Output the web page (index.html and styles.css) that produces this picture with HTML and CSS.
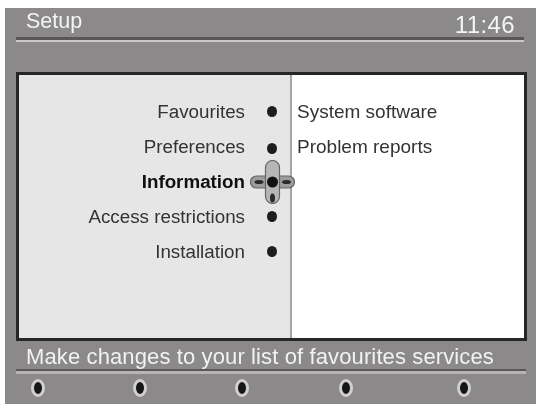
FILE: index.html
```html
<!DOCTYPE html>
<html lang="en">
<head>
    <meta charset="UTF-8">
    <meta name="viewport" content="width=device-width, initial-scale=1.0">
    <title>Setup</title>
    <link rel="stylesheet" href="styles.css">
</head>
<body>
    <div class="screen">
        <div class="header">
            <div class="title">Setup</div>
            <div class="clock">11:46</div>
        </div>

        <div class="panel">
            <div class="menu">
                <div class="menu-item"><span>Favourites</span><i class="dot"></i></div>
                <div class="menu-item"><span>Preferences</span><i class="dot"></i></div>
                <div class="menu-item active"><span>Information</span><i class="dot"></i></div>
                <div class="menu-item"><span>Access restrictions</span><i class="dot"></i></div>
                <div class="menu-item"><span>Installation</span><i class="dot"></i></div>

                <!-- cursor pad over the selected row -->
                <svg class="pad" width="45" height="44" viewBox="0 0 45 44">
                    <rect x="0.5" y="16" width="44" height="12" rx="6" fill="#9c9c9c" stroke="#666" stroke-width="1.2"/>
                    <rect x="15.5" y="0.5" width="14" height="43" rx="7" fill="#b6b6b6" stroke="#666" stroke-width="1.2"/>
                    <ellipse cx="9" cy="22" rx="4.5" ry="2" fill="#2a2a2a"/>
                    <ellipse cx="36.5" cy="22" rx="4.5" ry="2" fill="#2a2a2a"/>
                    <ellipse cx="22.5" cy="38" rx="2.5" ry="4.5" fill="#2a2a2a"/>
                    <circle cx="22.5" cy="22" r="5.5" fill="#111"/>
                </svg>
            </div>
            <div class="submenu">
                <div class="submenu-item">System software</div>
                <div class="submenu-item">Problem reports</div>
            </div>
        </div>

        <div class="footer">
            <div class="hint">Make changes to your list of favourites services</div>
            <div class="buttons">
                <i class="key"></i>
                <i class="key"></i>
                <i class="key"></i>
                <i class="key"></i>
                <i class="key"></i>
            </div>
        </div>
    </div>
</body>
</html>
```

FILE: styles.css
```css
html, body {
    margin: 0;
    padding: 0;
    background: #fff;
}
body {
    height: 404px;
    overflow: hidden;
    padding: 8px 6px 0 5px;
    box-sizing: border-box;
    font-family: "Liberation Sans", Arial, sans-serif;
}
.screen {
    height: 396px;
    background: #8b8989;
    padding: 0 9px 0 11px;
    display: flex;
    flex-direction: column;
    filter: blur(0.55px);
}
.header {
    height: 29px;
    display: flex;
    justify-content: space-between;
    align-items: flex-start;
    padding: 0 9px 0 10px;
    margin-right: 3px;
    border-bottom: 3px solid #585656;
    box-shadow: 0 2px 0 #c9c7c7;
}
.title {
    font-size: 21.5px;
    line-height: 24px;
    margin-top: 1px;
    color: #f4f4f4;
}
.clock {
    font-size: 24px;
    letter-spacing: 0.4px;
    line-height: 28px;
    margin-top: 3px;
    color: #f4f4f4;
}
.panel {
    margin-top: 32px;
    height: 263px;
    display: flex;
    border: 3px solid #262626;
}
.menu {
    position: relative;
    width: 271px;
    background: #e6e6e6;
    border-right: 2px solid #a5a5a5;
    padding-top: 19px;
}
.menu-item {
    height: 35px;
    display: flex;
    align-items: center;
    justify-content: flex-end;
    padding-right: 13px;
    font-size: 18.8px;
    color: #333;
}
.menu-item.active {
    font-weight: bold;
    color: #111;
}
.dot {
    width: 10px;
    height: 11px;
    margin-left: 22px;
    border-radius: 50%;
    background: #1d1d1d;
}
.menu-item:nth-child(2) .dot {
    margin-top: 3px;
}
.pad {
    position: absolute;
    left: 231px;
    top: 85px;
}
.submenu {
    flex: 1;
    background: #fff;
    padding: 19px 0 0 5px;
}
.submenu-item {
    height: 35px;
    line-height: 35px;
    font-size: 19px;
    color: #333;
}
.hint {
    height: 28px;
    line-height: 31px;
    padding-left: 10px;
    margin-right: 1px;
    font-size: 22px;
    letter-spacing: 0.12px;
    color: #f2f2f2;
    border-bottom: 2px solid #5a5858;
    box-shadow: 0 3px 0 #b5b3b3;
}
.buttons {
    display: grid;
    grid-template-columns: 102px 102px 104px 118px 14px;
    padding: 8px 0 0 15px;
}
.key {
    box-sizing: border-box;
    width: 14px;
    height: 18px;
    border-radius: 50%;
    background: #161616;
    border: 3px solid #d0cece;
}
```
